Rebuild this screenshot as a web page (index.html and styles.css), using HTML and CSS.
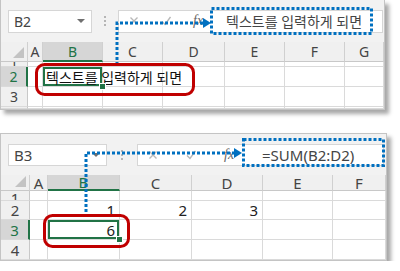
FILE: index.html
```html
<!DOCTYPE html>
<html lang="ko">
<head>
    <meta charset="UTF-8">
    <title>수식 입력줄</title>
    <link rel="stylesheet" href="styles.css">
</head>
<body>
<div class="page">
    <div class="sheet sheet-one">
        <div class="fbar">
            <div class="namebox"><span>B2</span><span class="caret"></span></div>
            <div class="grip"><i></i><i></i><i></i></div>
            <div class="finput">
                <div class="ficons">
                    <svg class="ic" viewBox="0 0 10 10"><path d="M1.5 1.5 L8.5 8.5 M8.5 1.5 L1.5 8.5"/></svg>
                    <svg class="ic" viewBox="0 0 10 10"><path d="M1 5.5 L4 8.5 L9.5 1"/></svg>
                    <span class="ic-fx">fx</span>
                </div>
                <div class="ftext">텍스트를 입력하게 되면</div>
            </div>
        </div>
        <div class="grid">
            <div class="hd corner"></div><div class="hd">A</div><div class="hd sel">B</div><div class="hd">C</div><div class="hd">D</div><div class="hd">E</div><div class="hd">F</div><div class="hd">G</div>
            <div class="rh cut"><span>1</span></div><div class="c"></div><div class="c"></div><div class="c"></div><div class="c"></div><div class="c"></div><div class="c"></div><div class="c"></div>
            <div class="rh rsel">2</div><div class="c"></div><div class="c active txt">텍스트를 입력하게 되면</div><div class="c"></div><div class="c"></div><div class="c"></div><div class="c"></div><div class="c"></div>
            <div class="rh">3</div><div class="c"></div><div class="c"></div><div class="c"></div><div class="c"></div><div class="c"></div><div class="c"></div><div class="c"></div>
            <div class="rh"></div><div class="c"></div><div class="c"></div><div class="c"></div><div class="c"></div><div class="c"></div><div class="c"></div><div class="c"></div>
        </div>
        <svg class="marks" xmlns="http://www.w3.org/2000/svg">
            <rect class="dots" x="210.5" y="8.5" width="160" height="25"/>
            <path class="dots" d="M116 65 V23 H202"/>
            <polygon class="head" points="202,18 210,23 202,28"/>
            <rect class="ring" x="35.5" y="64.5" width="157" height="30" rx="8"/>
        </svg>
    </div>

    <div class="sheet sheet-two">
        <div class="fbar">
            <div class="namebox"><span>B3</span><span class="caret"></span></div>
            <div class="grip"><i></i><i></i><i></i></div>
            <div class="finput">
                <div class="ficons">
                    <svg class="ic" viewBox="0 0 10 10"><path d="M1.5 1.5 L8.5 8.5 M8.5 1.5 L1.5 8.5"/></svg>
                    <svg class="ic" viewBox="0 0 10 10"><path d="M1 5.5 L4 8.5 L9.5 1"/></svg>
                    <span class="ic-fx">fx</span>
                </div>
                <div class="ftext">=SUM(B2:D2)</div>
            </div>
        </div>
        <div class="grid">
            <div class="hd corner"></div><div class="hd">A</div><div class="hd sel">B</div><div class="hd">C</div><div class="hd">D</div><div class="hd">E</div><div class="hd">F</div>
            <div class="rh cut"><span>1</span></div><div class="c"></div><div class="c"></div><div class="c"></div><div class="c"></div><div class="c"></div><div class="c"></div>
            <div class="rh">2</div><div class="c"></div><div class="c num">1</div><div class="c num">2</div><div class="c num">3</div><div class="c"></div><div class="c"></div>
            <div class="rh rsel">3</div><div class="c"></div><div class="c num active">6</div><div class="c"></div><div class="c"></div><div class="c"></div><div class="c"></div>
            <div class="rh">4</div><div class="c"></div><div class="c"></div><div class="c"></div><div class="c"></div><div class="c"></div><div class="c"></div>
        </div>
        <svg class="marks" xmlns="http://www.w3.org/2000/svg">
            <rect class="dots" x="242.5" y="5.5" width="140" height="26"/>
            <path class="dots" d="M85 83 V19 H233"/>
            <polygon class="head" points="233,14 241,19 233,24"/>
            <rect class="ring" x="43.5" y="81.5" width="84" height="31" rx="8"/>
        </svg>
    </div>
</div>
</body>
</html>
```

FILE: styles.css
```css
body {
    margin: 0;
    background: #fff;
    font-family: "Noto Sans", "Noto Sans CJK KR", sans-serif;
    color: #333;
}
.page {
    display: flex;
    flex-direction: column;
    gap: 23px;
}
.sheet {
    position: relative;
    box-sizing: border-box;
    background: #f2f2f2;
    border: 1px solid #c4c4c4;
    box-shadow: 4px 4px 4px #a8a8a8;
}
.sheet-one {
    width: 385px;
    border-top: none;
}
.sheet-two {
    width: 387px;
}

/* formula bar */
.fbar {
    display: flex;
    align-items: center;
    padding-left: 7px;
}
.sheet-one .fbar { height: 42px; }
.sheet-two .fbar { height: 41px; }
.namebox {
    display: flex;
    align-items: center;
    justify-content: space-between;
    box-sizing: border-box;
    background: #fff;
    border: 1px solid #d6d6d6;
    padding: 0 6px 0 5px;
    color: #444;
}
.sheet-one .namebox { width: 84px; height: 23px; font-size: 14px; }
.sheet-two .namebox { width: 99px; height: 22px; font-size: 15px; }
.caret {
    width: 0;
    height: 0;
    border-left: 4px solid transparent;
    border-right: 4px solid transparent;
    border-top: 4px solid #707070;
}
.grip {
    display: flex;
    flex-direction: column;
    align-items: center;
    gap: 2px;
}
.sheet-one .grip { width: 26px; }
.sheet-two .grip { width: 30px; }
.grip i {
    display: block;
    width: 2px;
    height: 2px;
    background: #b5b5b5;
}
.finput {
    flex: 1;
    display: flex;
    align-items: center;
    background: #fff;
    border: 1px solid #d6d6d6;
    box-sizing: border-box;
    margin-right: 1px;
}
.sheet-one .finput { height: 23px; }
.sheet-two .finput { height: 22px; margin-right: 2px; }
.ficons {
    display: flex;
    align-items: center;
    box-sizing: border-box;
    padding-left: 10px;
}
.sheet-one .ficons { width: 92px; gap: 22px; }
.sheet-two .ficons { width: 105px; gap: 28px; }
.ic {
    width: 10px;
    height: 10px;
    fill: none;
    stroke: #b8b8b8;
    stroke-width: 1.4;
}
.ic-fx {
    font-family: "Liberation Serif", serif;
    font-style: italic;
    color: #666;
    font-size: 14px;
    line-height: 1;
}
.ftext {
    color: #444;
    white-space: nowrap;
}
.sheet-one .ftext { padding-left: 15px; font-size: 14px; }
.sheet-two .ftext { padding-left: 19px; font-size: 15px; }

/* cells */
.grid {
    display: grid;
    background: #fff;
}
.sheet-one .grid {
    grid-template-columns: 27px 15px 60px 60px 62px 60px 60px 1fr;
    grid-template-rows: 20px 5px 20px 20px 2px;
    font-size: 14px;
}
.sheet-two .grid {
    grid-template-columns: 29px 18px 72px 72px 71px 70px 1fr;
    grid-template-rows: 16px 10px 19px 20px 20px;
    font-size: 15px;
}
.hd, .rh, .c {
    box-sizing: border-box;
    border-right: 1px solid #dadada;
    border-bottom: 1px solid #dadada;
}
.hd {
    display: flex;
    align-items: center;
    justify-content: center;
    background: #f0f0f0;
    color: #444;
    border-right-color: #d0d0d0;
    border-bottom-color: #c8c8c8;
}
.hd.sel {
    background: #d6d6d6;
    color: #217346;
    border-bottom: 2px solid #217346;
}
.corner {
    position: relative;
}
.corner::after {
    content: "";
    position: absolute;
    right: 3px;
    bottom: 3px;
    border-left: 11px solid transparent;
    border-bottom: 11px solid #c3c3c3;
}
.rh {
    display: flex;
    align-items: center;
    justify-content: center;
    background: #f0f0f0;
    color: #444;
    border-right-color: #c8c8c8;
}
.rh.rsel {
    background: #d6d6d6;
    color: #217346;
    border-right: 2px solid #217346;
}
.rh.cut {
    align-items: flex-end;
    overflow: hidden;
}
.rh.cut span {
    line-height: 4px;
}
.c {
    display: flex;
    align-items: center;
    min-width: 0;
    color: #222;
}
.c.txt {
    white-space: nowrap;
    padding-left: 3px;
    color: #111;
    font-size: 14px;
}
.c.num {
    justify-content: flex-end;
    padding-right: 4px;
}
.c.active {
    position: relative;
    box-shadow: inset 0 0 0 2px #217346;
}
.c.active::after {
    content: "";
    position: absolute;
    right: -4px;
    bottom: -4px;
    width: 5px;
    height: 5px;
    background: #217346;
    border: 1px solid #fff;
}

/* annotations */
.marks {
    position: absolute;
    left: 0;
    top: 0;
    width: 100%;
    height: 100%;
    overflow: visible;
    pointer-events: none;
}
.dots {
    fill: none;
    stroke: #0070c0;
    stroke-width: 3;
    stroke-dasharray: 3 2;
}
.head {
    fill: #0070c0;
}
.ring {
    fill: none;
    stroke: #c00000;
    stroke-width: 3;
}
```
